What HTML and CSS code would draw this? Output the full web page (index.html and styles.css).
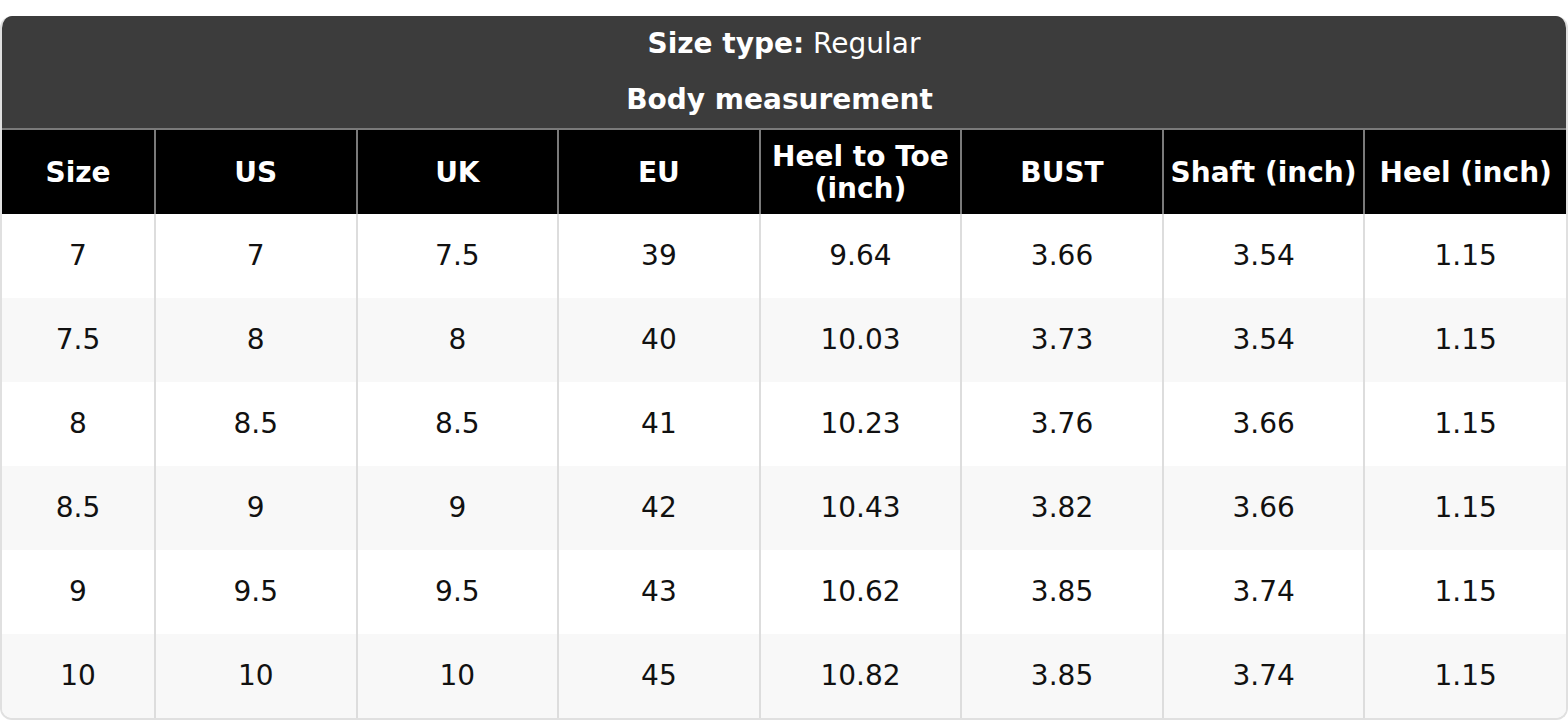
FILE: index.html
```html
<!DOCTYPE html>
<html lang="en">
<head>
<meta charset="utf-8">
<title>Size chart</title>
<link rel="stylesheet" href="styles.css">
</head>
<body>
<div class="chart">
  <div class="title">
    <div class="title-line"><strong>Size type:</strong> Regular</div>
    <div class="title-line"><strong>Body measurement</strong>&nbsp;</div>
  </div>
  <table class="sizes">
    <colgroup>
      <col class="c-first">
      <col><col><col><col><col><col><col>
    </colgroup>
    <thead>
      <tr>
        <th>Size</th><th>US</th><th>UK</th><th>EU</th><th>Heel to Toe (inch)</th><th>BUST</th><th>Shaft (inch)</th><th>Heel (inch)</th>
      </tr>
    </thead>
    <tbody>
      <tr><td>7</td><td>7</td><td>7.5</td><td>39</td><td>9.64</td><td>3.66</td><td>3.54</td><td>1.15</td></tr>
      <tr><td>7.5</td><td>8</td><td>8</td><td>40</td><td>10.03</td><td>3.73</td><td>3.54</td><td>1.15</td></tr>
      <tr><td>8</td><td>8.5</td><td>8.5</td><td>41</td><td>10.23</td><td>3.76</td><td>3.66</td><td>1.15</td></tr>
      <tr><td>8.5</td><td>9</td><td>9</td><td>42</td><td>10.43</td><td>3.82</td><td>3.66</td><td>1.15</td></tr>
      <tr><td>9</td><td>9.5</td><td>9.5</td><td>43</td><td>10.62</td><td>3.85</td><td>3.74</td><td>1.15</td></tr>
      <tr><td>10</td><td>10</td><td>10</td><td>45</td><td>10.82</td><td>3.85</td><td>3.74</td><td>1.15</td></tr>
    </tbody>
  </table>
</div>
</body>
</html>
```

FILE: styles.css
```css
html, body {
  margin: 0;
  padding: 0;
  background: #ffffff;
}

body {
  padding-top: 16px;
  font-family: "DejaVu Sans", Verdana, sans-serif;
  font-size: 28px;
  color: #111111;
}

.chart {
  border: 2px solid #e0e0e0;
  border-top: none;
  border-radius: 12px;
  overflow: hidden;
}

.title {
  background: #3c3c3c;
  color: #ffffff;
  text-align: center;
  border-bottom: 2px solid #7a7a7a;
}

.title-line {
  height: 56px;
  line-height: 56px;
}

.title-line strong {
  font-weight: bold;
}

.sizes {
  width: 100%;
  border-collapse: collapse;
  table-layout: fixed;
}

.c-first {
  width: 153px;
}

.sizes th {
  background: #000000;
  color: #ffffff;
  font-weight: bold;
  line-height: 32px;
  height: 64px;
  padding: 11px 6px 9px;
  text-align: center;
  vertical-align: middle;
  border-right: 2px solid #7a7a7a;
}

.sizes td {
  line-height: 32px;
  padding: 26px 6px;
  text-align: center;
  vertical-align: middle;
  border-right: 2px solid #dddddd;
}

.sizes th:last-child,
.sizes td:last-child {
  border-right: none;
}

.sizes tbody tr:nth-child(even) td {
  background: #f8f8f8;
}
```
